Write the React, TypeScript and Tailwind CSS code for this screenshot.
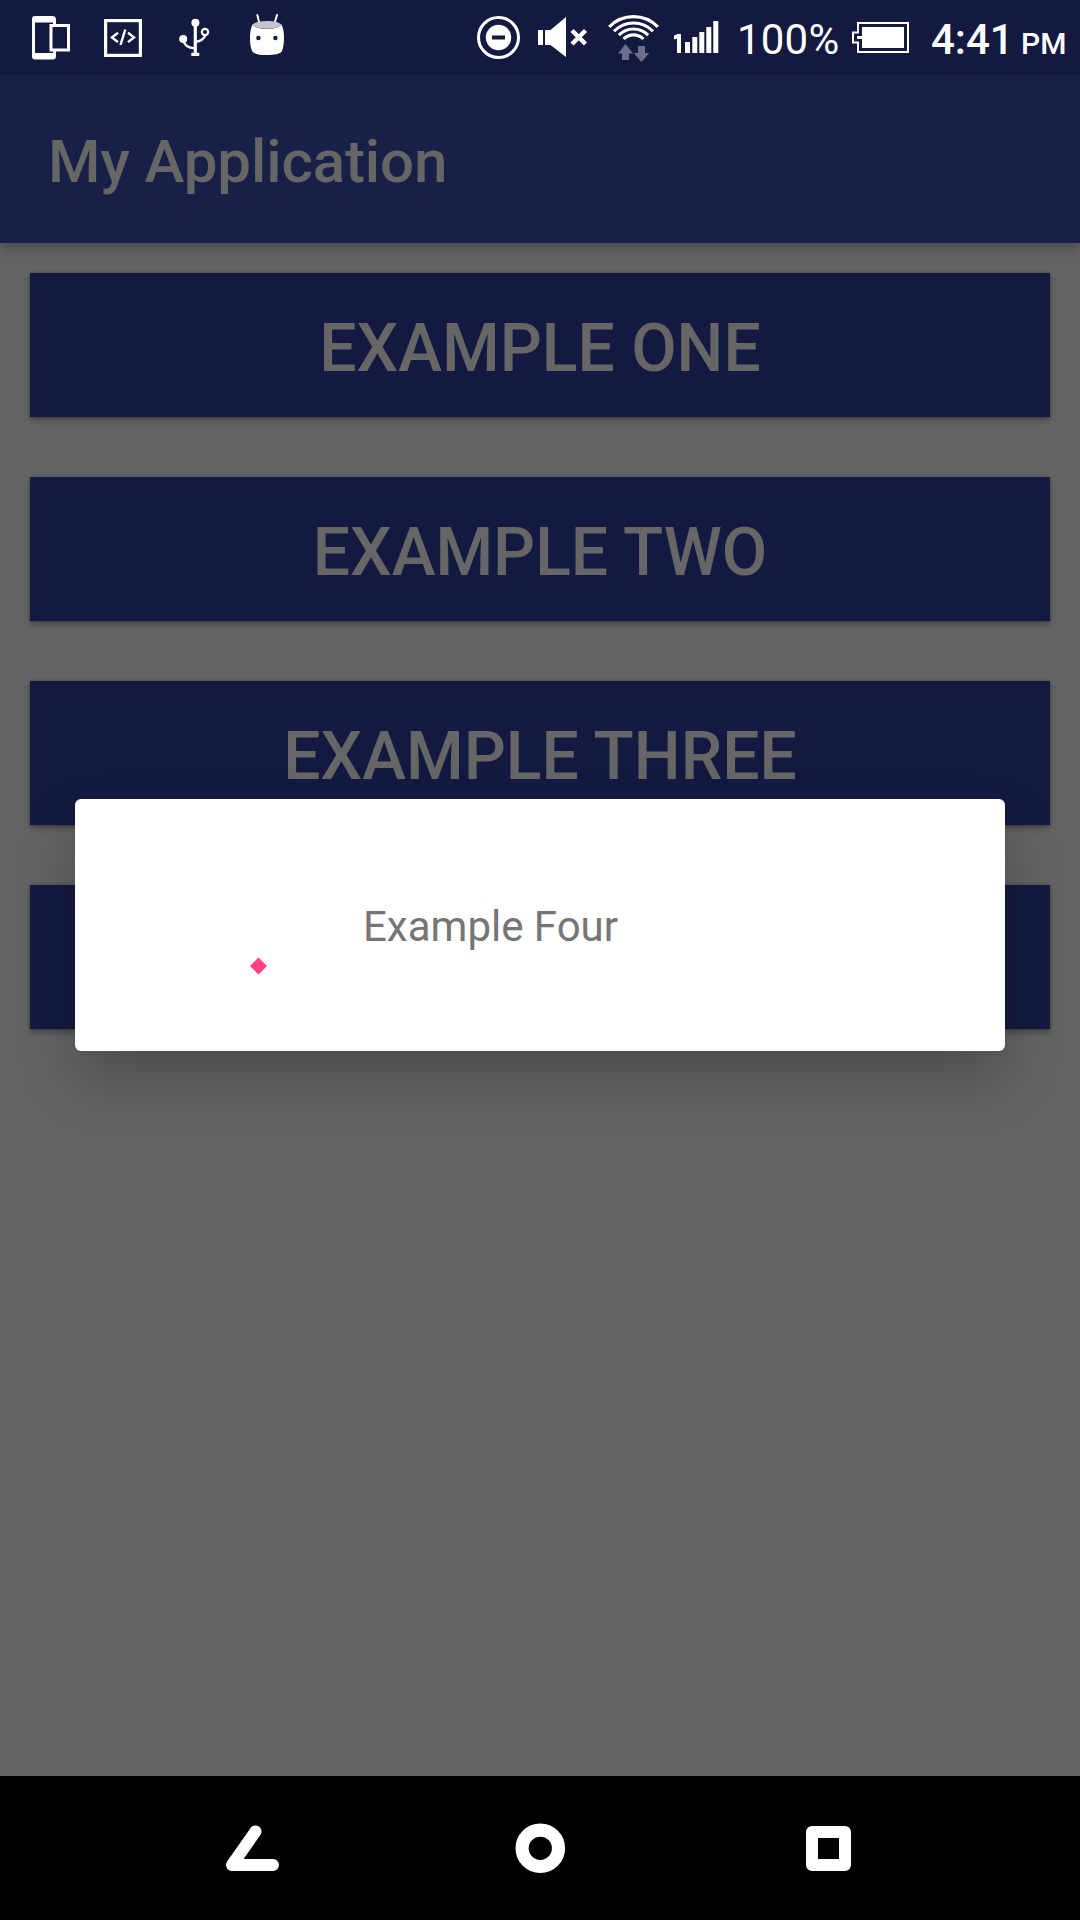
import type { ReactNode } from "react";

/* The last button's label sits entirely behind the dialog. */
const buttons = [
  { name: "Example One", covered: false },
  { name: "Example Two", covered: false },
  { name: "Example Three", covered: false },
  { name: "Example Four", covered: true },
];

/* Status-bar glyph: spans the full bar height so shapes share the bar's coordinates. */
function Glyph({ x, w, children }: { x: number; w: number; children: ReactNode }) {
  return (
    <svg width={w} height={75} viewBox={`${x} 0 ${w} 75`} fill="none" className="block shrink-0">
      {children}
    </svg>
  );
}

function StatusBar() {
  return (
    <div className="flex h-[75px] justify-between bg-[#141940] text-white">
      <div className="flex pl-[30px]">
        <Glyph x={30} w={42}>
          <path
            fill="#fff"
            fillRule="evenodd"
            d="M35 16h17.500a3.500 3.500 0 0 1 3.500 3.500V24h14v27.500H56v4.500a3.500 3.500 0 0 1-3.500 3.500H35a3 3 0 0 1-3-3V19a3 3 0 0 1 3-3ZM35 22.500V53h18V51.500H49.500V24H53V22.500ZM52.500 27V48.500H67V27Z"
          />
        </Glyph>
        <div className="w-[30px]" />
        <Glyph x={102} w={42}>
          <rect x="105.600" y="20.600" width="34.800" height="34.800" stroke="#fff" strokeWidth="3.200" />
          <path d="M118 32.700L112 37.400l6 4.700M128 32.700l6 4.700-6 4.700M125.300 29.500l-4.800 15.300" stroke="#fff" strokeWidth="2.400" />
        </Glyph>
        <div className="w-[33px]" />
        <Glyph x={177} w={36}>
          <circle cx="195.400" cy="22.800" r="4" fill="#fff" />
          <circle cx="183.200" cy="39" r="4" fill="#fff" />
          <circle cx="205" cy="32" r="3.200" stroke="#fff" strokeWidth="2.200" />
          <path d="M195.300 24v30" stroke="#fff" strokeWidth="3.200" />
          <path d="M191.300 52.800h8V56h-8Z" fill="#fff" />
          <path d="M183.500 40c.8 6 5 8 11.500 8.300M205.500 35c-1.500 4-4.500 6.200-10 6.800" stroke="#fff" strokeWidth="2.200" />
        </Glyph>
        <div className="w-[33px]" />
        <Glyph x={246} w={42}>
          <path d="M257.300 15l2 8M277 15l-2.400 8" stroke="#fff" strokeWidth="2" strokeLinecap="round" />
          <path d="M252.500 24.500C256 28 261 29 267 29s11-1 14.500-4.500C283.500 28 284 33 284 38c0 6-.8 10-2 13-1.500 3-8 4-15 4s-13.500-1-15-4c-1.200-3-2-7-2-13 0-5 .5-10 2.500-13.500Z" fill="#fff" />
          <path d="M252.500 24.500C255 22 261 21 267 21s12 1 14.500 3.500C279 27.500 273 28.700 267 28.700s-12-1.200-14.500-4.200Z" fill="#c4c5d0" />
          <circle cx="258.400" cy="38" r="2.200" fill="#141940" />
          <circle cx="275.400" cy="38" r="2.200" fill="#141940" />
        </Glyph>
      </div>
      <div className="flex">
        <Glyph x={476} w={46}>
          <circle cx="498.500" cy="37.500" r="20" stroke="#fff" strokeWidth="3" />
          <circle cx="498.500" cy="37.500" r="12.700" fill="#fff" />
          <path d="M492 37.500h13" stroke="#141940" strokeWidth="4" />
        </Glyph>
        <div className="w-[14px]" />
        <Glyph x={536} w={54}>
          <path d="M538 30h5v15h-5ZM545 30h5.500L566 17v40L550.500 45H545Z" fill="#fff" />
          <path d="M572 30.500l13.500 13.500M585.500 30.500L572 44" stroke="#fff" strokeWidth="4.400" />
        </Glyph>
        <div className="w-[14px]" />
        <Glyph x={604} w={58}>
          <path d="M609.200 26.800a34 34 0 0 1 48.600 0M614 31.300a27 27 0 0 1 39 0M618.800 35.200a20.500 20.500 0 0 1 29.400 0M623.600 39a14 14 0 0 1 19.800 0" stroke="#fff" strokeWidth="3.100" />
          <path d="M625.500 44l7.500 9.500h-4V60h-7v-6.500h-4ZM638 46h7v7h4.200l-7.700 9-7.700-9h4.200Z" fill="#6c6f8c" />
        </Glyph>
        <div className="w-[11px]" />
        <Glyph x={673} w={46}>
          <path d="M677.500 34h3.500v19h-4V38.500l-3 1v-3.800ZM685 42h5v11h-5ZM692.300 37h5v16h-5ZM699.300 32h5v21h-5ZM706.300 27h5v26h-5ZM713.300 21h5v32h-5Z" fill="#fff" />
        </Glyph>
        <span className="ml-[18px] w-[104px] pt-[2px] text-[42px] leading-[75px] tracking-[0.2px] whitespace-nowrap">100%</span>
        <div className="w-[9px]" />
        <Glyph x={850} w={62}>
          <path d="M858 23h50v29h-50v-9.500h-5v-10h5Z" stroke="#fff" strokeWidth="2" />
          <path d="M862 27h42v21h-42v-9h-5v-3h5Z" fill="#fff" />
        </Glyph>
        <span className="ml-[19px] w-[83px] pt-[2px] text-[42px] leading-[75px] font-medium whitespace-nowrap">4:41</span>
        <span className="w-[66px] pt-[6px] pl-[7px] text-[30px] leading-[75px] font-medium whitespace-nowrap">PM</span>
      </div>
    </div>
  );
}

function NavBar() {
  return (
    <div className="flex h-36 justify-center gap-36 bg-black">
      <svg width="144" height="144" viewBox="180 1776 144 144" fill="none">
        <path d="M255.500 1831.500L232 1865h41" stroke="#fff" strokeWidth="12" strokeLinecap="round" strokeLinejoin="round" />
      </svg>
      <svg width="144" height="144" viewBox="468 1776 144 144" fill="none">
        <circle cx="540.300" cy="1848.300" r="18.200" stroke="#fff" strokeWidth="13.200" />
      </svg>
      <svg width="144" height="144" viewBox="756 1776 144 144" fill="none">
        <path fillRule="evenodd" fill="#fff" d="M812 1826h33a6 6 0 0 1 6 6v33a6 6 0 0 1-6 6h-33a6 6 0 0 1-6-6v-33a6 6 0 0 1 6-6ZM818 1838v21h21v-21Z" />
      </svg>
    </div>
  );
}

function LoadingDialog() {
  return (
    <div className="absolute top-[799px] left-[75px] flex h-[252px] w-[930px] rounded-md bg-white shadow-[0_28px_60px_rgba(0,0,0,0.24)]">
      <svg width="18" height="18" viewBox="0 0 18 18" className="mt-[158px] ml-[174px]">
        <path d="M9.500.500L18 9 9.500 17.500 1 9Z" fill="#ff4081" />
      </svg>
      <span className="mt-[103px] ml-[96px] text-[42px] leading-[50px] whitespace-nowrap text-[#757575]">Example Four</span>
    </div>
  );
}

export default function App() {
  return (
    <div className="relative flex h-[1920px] w-[1080px] flex-col overflow-hidden bg-[#646464] font-['Roboto',sans-serif]">
      <StatusBar />
      <header className="flex h-[168px] items-center bg-[#192048] px-12 pt-[5px] text-[60px] font-medium tracking-[-0.08px] text-[#666666] shadow-[0_4px_12px_rgba(0,0,0,0.32)]">
        My Application
      </header>
      <main className="flex flex-1 flex-col gap-[60px] p-[30px]">
        {buttons.map(({ name, covered }) => (
          <button
            key={name}
            aria-label={name}
            className="h-36 bg-[#131940] pt-[6px] text-[66px] font-medium text-[#666666] uppercase shadow-[0_3px_6px_rgba(0,0,0,0.32),0_0_3px_rgba(0,0,0,0.2)]"
          >
            {covered ? null : name}
          </button>
        ))}
      </main>
      <NavBar />
      <LoadingDialog />
    </div>
  );
}
